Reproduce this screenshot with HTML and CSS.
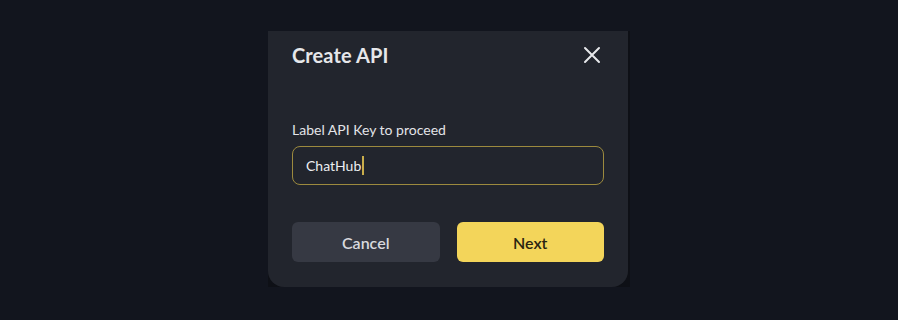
FILE: index.html
```html
<!DOCTYPE html>
<html lang="en">
<head>
    <meta charset="UTF-8">
    <meta name="viewport" content="width=device-width, initial-scale=1.0">
    <title>Create API</title>
    <link rel="stylesheet" href="styles.css">
</head>
<body>
    <div class="backdrop">
        <div class="modal">
            <div class="modal-header">
                <h2>Create API</h2>
                <button class="close-btn" aria-label="Close">
                    <svg width="18" height="18" viewBox="0 0 18 18" fill="none">
                        <path d="M2 2L16 16M16 2L2 16" stroke="#e6e7ea" stroke-width="2" stroke-linecap="round"/>
                    </svg>
                </button>
            </div>

            <label class="field-label" for="apiLabel">Label API Key to proceed</label>
            <div class="field">
                <span class="field-text">ChatHub</span><span class="caret"></span>
            </div>

            <div class="actions">
                <button class="btn btn-cancel">Cancel</button>
                <button class="btn btn-next">Next</button>
            </div>
        </div>
    </div>
</body>
</html>
```

FILE: styles.css
```css
* {
    margin: 0;
    padding: 0;
    box-sizing: border-box;
}

body {
    font-family: 'Lato', 'Noto Sans', sans-serif;
    background: #12151e;
    width: 898px;
    height: 320px;
    overflow: hidden;
    color: #e6e7ea;
}

.backdrop {
    width: 362px;
    margin: 31px auto 0;
    background: #0e1016;
}

.modal {
    width: 360px;
    background: #22252d;
    border-radius: 0 0 16px 16px;
    padding: 12px 24px 25px;
}

.modal-header {
    display: flex;
    justify-content: space-between;
    align-items: center;
    height: 24px;
}

.modal-header h2 {
    font-size: 20px;
    font-weight: 700;
    letter-spacing: 0.1px;
}

.close-btn {
    background: none;
    border: none;
    display: flex;
    margin-right: 3px;
    cursor: pointer;
}

.field-label {
    display: block;
    margin-top: 54px;
    font-size: 14px;
    line-height: 18px;
    color: #e3e4e8;
}

.field {
    display: flex;
    align-items: center;
    height: 39px;
    margin-top: 7px;
    padding: 0 13px;
    border: 1.5px solid #9c8a3e;
    border-radius: 8px;
    font-size: 14px;
}

.field-text {
    color: #eceef1;
}

.caret {
    width: 1.5px;
    height: 19px;
    margin-left: 1px;
    background: #c9ad4b;
}

.actions {
    display: flex;
    gap: 17px;
    margin-top: 37px;
}

.btn {
    flex: 1;
    height: 40px;
    border: none;
    border-radius: 6px;
    font-family: inherit;
    font-size: 16px;
    font-weight: 600;
    cursor: pointer;
}

.btn-cancel {
    background: #363943;
    color: #d9dade;
}

.btn-next {
    background: #f3d55a;
    color: #2a2411;
}
```
